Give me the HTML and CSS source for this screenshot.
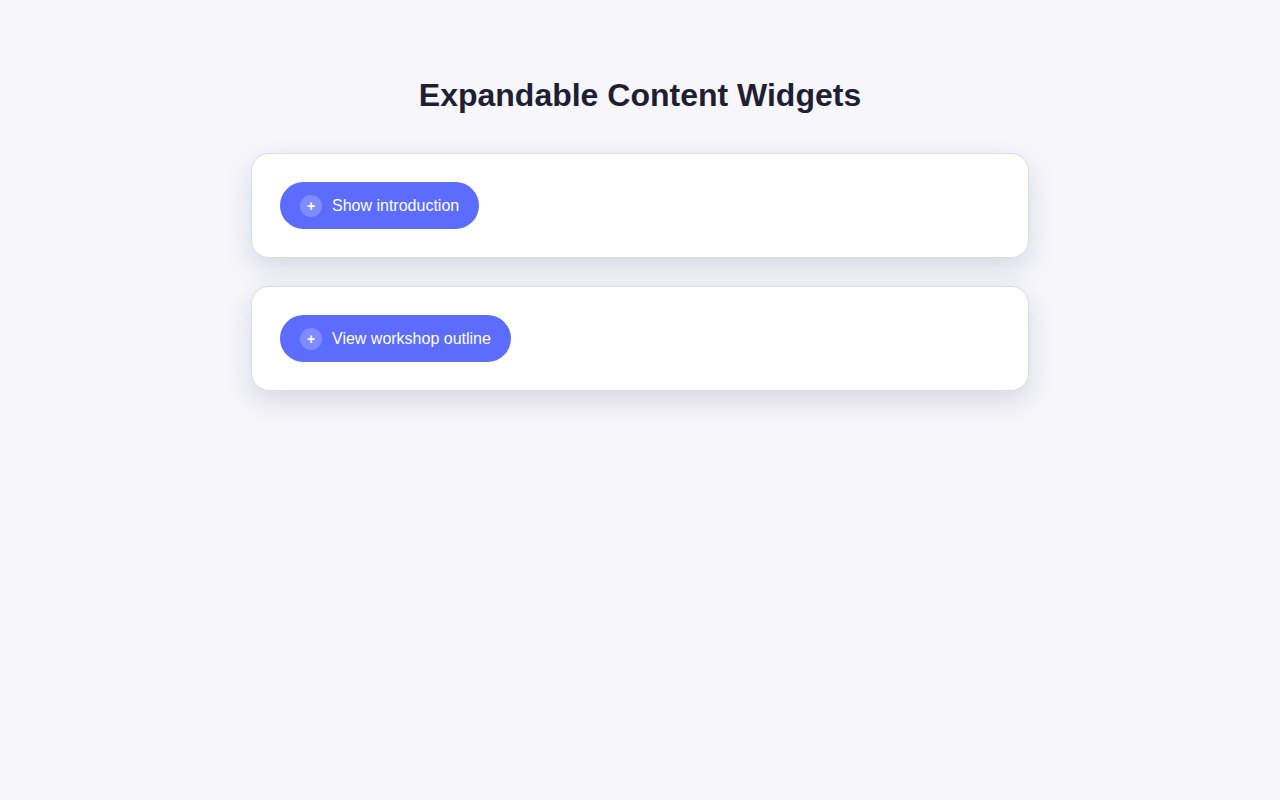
FILE: index.html
```html
<!DOCTYPE html>
<html lang="en">
<head>
<meta charset="utf-8">
<title>Expandable Content Widgets</title>
<link rel="stylesheet" href="styles.css">
</head>
<body>
<main class="page">
  <h1 class="title">Expandable Content Widgets</h1>
  <section class="card">
    <button class="toggle" type="button">
      <span class="toggle-icon">+</span>
      <span class="toggle-label">Show introduction</span>
    </button>
  </section>
  <section class="card">
    <button class="toggle" type="button">
      <span class="toggle-icon">+</span>
      <span class="toggle-label">View workshop outline</span>
    </button>
  </section>
</main>
</body>
</html>
```

FILE: styles.css
```css
* { box-sizing: border-box; }
html, body { margin: 0; padding: 0; }
body {
  background: #f6f6fb;
  font-family: "Liberation Sans", Arial, Helvetica, sans-serif;
  color: #1f1f33;
  min-height: 800px;
}
.page {
  width: 778px;
  margin: 0 auto;
  padding-top: 76px;
  display: flex;
  flex-direction: column;
  gap: 28px;
}
.title {
  margin: 0 0 11px;
  text-align: center;
  font-size: 32px;
  line-height: 38px;
  font-weight: 700;
  color: #1f1f33;
}
.card {
  background: #fff;
  border: 1px solid #dcdce4;
  border-radius: 18px;
  padding: 28px;
  box-shadow: 0 10px 28px rgba(35, 35, 80, 0.14);
}
.toggle {
  display: inline-flex;
  align-items: center;
  gap: 10px;
  height: 47px;
  padding: 0 20px;
  border: none;
  border-radius: 24px;
  background: #5b6cff;
  color: #fff;
  font-family: inherit;
  font-size: 16px;
  cursor: pointer;
}
.toggle-icon {
  width: 22px;
  height: 22px;
  border-radius: 50%;
  background: rgba(255, 255, 255, 0.22);
  display: inline-flex;
  align-items: center;
  justify-content: center;
  font-size: 14px;
  font-weight: 700;
  line-height: 1;
}
.toggle-label { line-height: 1; }
```
